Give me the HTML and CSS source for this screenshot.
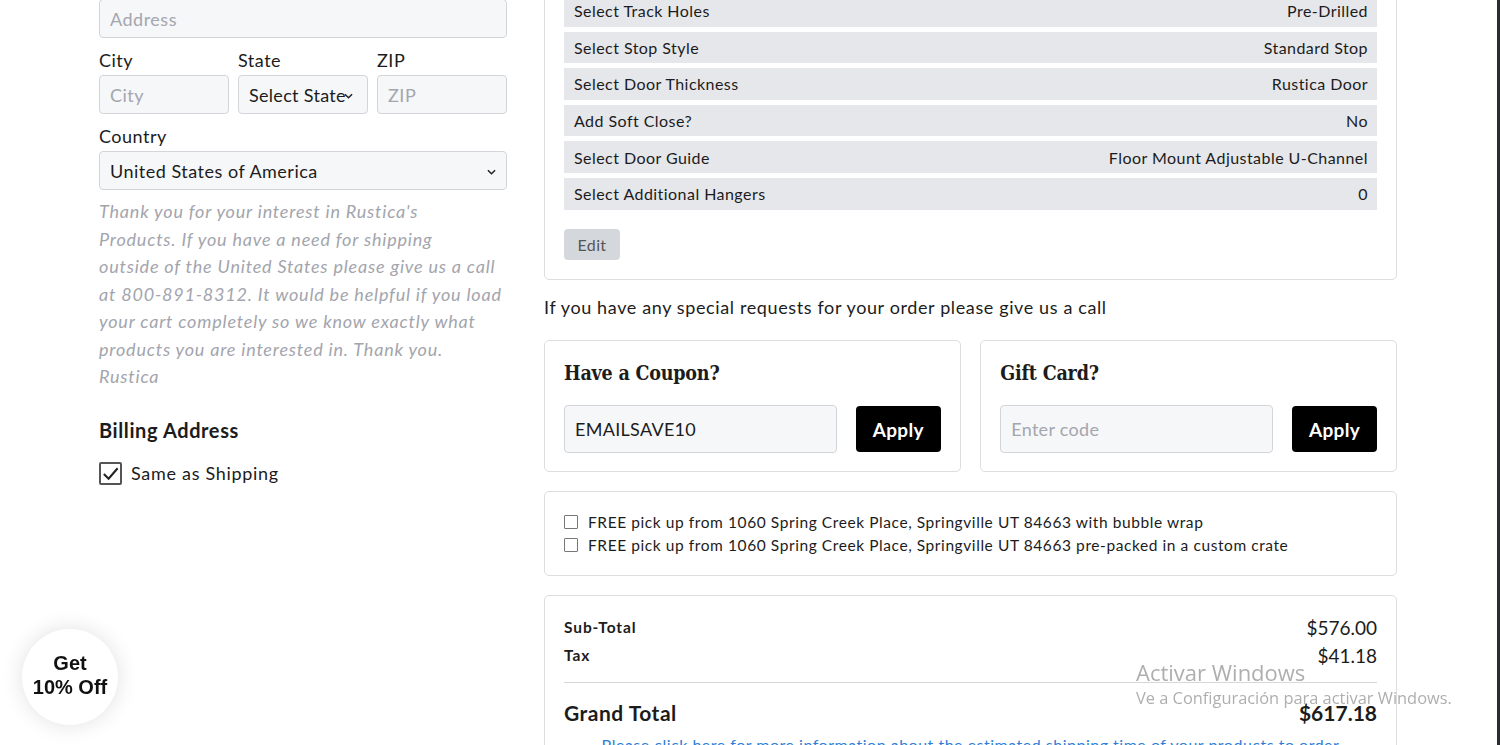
FILE: index.html
```html
<!DOCTYPE html>
<html lang="en">
    <head>
        <meta charset="UTF-8" />
        <meta name="viewport" content="width=device-width, initial-scale=1.0" />
        <title>Checkout</title>
        <link rel="stylesheet" href="styles.css">
    </head>
    <body>
        <div class="page">
            <div class="col-left">
                <input class="field" type="text" placeholder="Address">
                <div class="three">
                    <div class="grp">
                        <label class="lbl">City</label>
                        <input class="field" type="text" placeholder="City">
                    </div>
                    <div class="grp">
                        <label class="lbl">State</label>
                        <div class="field select select-sm">Select State<svg class="chev" viewBox="0 0 10 6"><path d="M1 1l4 4 4-4" fill="none" stroke="#222" stroke-width="1.6"/></svg></div>
                    </div>
                    <div class="grp">
                        <label class="lbl">ZIP</label>
                        <input class="field" type="text" placeholder="ZIP">
                    </div>
                </div>
                <div class="grp country">
                    <label class="lbl">Country</label>
                    <div class="field select">United States of America<svg class="chev" viewBox="0 0 10 6"><path d="M1 1l4 4 4-4" fill="none" stroke="#222" stroke-width="1.6"/></svg></div>
                </div>
                <p class="note">Thank you for your interest in Rustica's<br>Products. If you have a need for shipping<br>outside of the United States please give us a call<br>at 800-891-8312. It would be helpful if you load<br>your cart completely so we know exactly what<br>products you are interested in. Thank you.<br>Rustica</p>
                <h3 class="billing">Billing Address</h3>
                <label class="same">
                    <span class="bigbox"><svg viewBox="0 0 20 20"><path d="M3 10.5l5 5 9.5-11" fill="none" stroke="#222" stroke-width="2.2"/></svg></span>
                    Same as Shipping
                </label>
            </div>

            <div class="col-right">
                <div class="card options">
                    <div class="opt"><span>Select Track Holes</span><span>Pre-Drilled</span></div>
                    <div class="opt"><span>Select Stop Style</span><span>Standard Stop</span></div>
                    <div class="opt"><span>Select Door Thickness</span><span>Rustica Door</span></div>
                    <div class="opt"><span>Add Soft Close?</span><span>No</span></div>
                    <div class="opt"><span>Select Door Guide</span><span>Floor Mount Adjustable U-Channel</span></div>
                    <div class="opt"><span>Select Additional Hangers</span><span>0</span></div>
                    <button class="edit">Edit</button>
                </div>

                <p class="requests">If you have any special requests for your order please give us a call</p>

                <div class="codes">
                    <div class="card code">
                        <h4>Have a Coupon?</h4>
                        <div class="code-row">
                            <input class="code-input" type="text" value="EMAILSAVE10">
                            <button class="apply">Apply</button>
                        </div>
                    </div>
                    <div class="card code">
                        <h4>Gift Card?</h4>
                        <div class="code-row">
                            <input class="code-input" type="text" placeholder="Enter code">
                            <button class="apply">Apply</button>
                        </div>
                    </div>
                </div>

                <div class="card pickup">
                    <label class="pick"><span class="smallbox"></span>FREE pick up from 1060 Spring Creek Place, Springville UT 84663 with bubble wrap</label>
                    <label class="pick"><span class="smallbox"></span>FREE pick up from 1060 Spring Creek Place, Springville UT 84663 pre-packed in a custom crate</label>
                </div>

                <div class="card totals">
                    <div class="tot-row"><span class="tot-name">Sub-Total</span><span class="tot-val">$576.00</span></div>
                    <div class="tot-row"><span class="tot-name">Tax</span><span class="tot-val">$41.18</span></div>
                    <div class="tot-line"></div>
                    <div class="grand"><span>Grand Total</span><span class="grand-val">$617.18</span></div>
                    <p class="ship-link">Please click here for more information about the estimated shipping time of your products to order</p>
                </div>
            </div>
        </div>

        <div class="promo">Get<br>10% Off</div>

        <div class="activate">
            <div class="act-title">Activar Windows</div>
            <div class="act-sub">Ve a Configuración para activar Windows.</div>
        </div>

        <div class="edge"></div>
    </body>
</html>
```

FILE: styles.css
```css
body{
    margin: 0;
    padding: 0;
    background-color: #ffffff;
    font-family: Lato, "Open Sans", sans-serif;
    letter-spacing: 0.5px;
    color: #1c1c1c;
    overflow: hidden;
}

.page{
    display: grid;
    grid-template-columns: 408px 853px;
    column-gap: 37px;
    align-items: start;
    padding-left: 99px;
    margin-top: -25px;
}

/* ---- left column ---- */
.col-left{
    padding-top: 24px;
}

.field{
    box-sizing: border-box;
    width: 100%;
    height: 39px;
    border: 1px solid #d3d5da;
    border-radius: 4px;
    background-color: #f6f7f9;
    padding: 0 10px;
    font-family: Lato, sans-serif;
    font-size: 18px;
    letter-spacing: 0.5px;
    color: #1c1c1c;
    outline: none;
}
.field::placeholder{
    color: #a4a6ad;
}

.three{
    display: grid;
    grid-template-columns: 1fr 1fr 1fr;
    column-gap: 9px;
    margin-top: 10px;
}

.lbl{
    display: block;
    font-size: 18px;
    line-height: 24px;
    margin-bottom: 3px;
}

.country{
    margin-top: 10px;
}

.select{
    display: flex;
    align-items: center;
    justify-content: space-between;
    white-space: nowrap;
}
.select-sm{
    padding: 0 12px 0 10px;
    justify-content: flex-start;
    letter-spacing: 0.3px;
}
.select-sm .chev{
    margin-left: -2px;
}
.chev{
    flex-shrink: 0;
    width: 9px;
    height: 6px;
    margin-top: 3px;
}

.note{
    margin: 8px 0 0 0;
    font-size: 18px;
    line-height: 27.5px;
    font-style: italic;
    letter-spacing: 0.8px;
    white-space: nowrap;
    color: #a3a5ad;
}

.billing{
    margin: 27px 0 0 0;
    font-size: 20px;
    line-height: 24px;
    font-weight: 700;
    letter-spacing: 0.6px;
}

.same{
    display: flex;
    align-items: center;
    gap: 9px;
    margin-top: 20px;
    font-size: 18px;
    letter-spacing: 0.7px;
}
.bigbox{
    box-sizing: border-box;
    width: 23px;
    height: 23px;
    border: 2px solid #555;
    border-radius: 2px;
    display: flex;
    align-items: center;
    justify-content: center;
}
.bigbox svg{
    width: 19px;
    height: 19px;
}

/* ---- right column ---- */
.card{
    box-sizing: border-box;
    border: 1px solid #dcdde0;
    border-radius: 5px;
    background-color: #fff;
}

.options{
    padding: 19px 19px 19px 19px;
}
.opt{
    display: flex;
    justify-content: space-between;
    align-items: center;
    height: 31.6px;
    padding: 0 9px 0 10px;
    margin-bottom: 5px;
    background-color: #e6e7eb;
    font-size: 16px;
    letter-spacing: 0.45px;
}
.edit{
    margin-top: 14.5px;
    width: 56px;
    height: 31px;
    border: 0;
    border-radius: 4px;
    background-color: #d4d7dc;
    color: #555;
    font-family: Lato, sans-serif;
    font-size: 16px;
    letter-spacing: 0.4px;
}

.requests{
    margin: 15px 0 0 0;
    font-size: 18px;
    line-height: 24px;
    letter-spacing: 0.62px;
}

.codes{
    display: grid;
    grid-template-columns: 1fr 1fr;
    column-gap: 19.5px;
    margin-top: 21px;
}
.code{
    padding: 20px 19px 18px 19px;
}
.code h4{
    margin: 0;
    font-family: "DejaVu Serif", serif;
    font-stretch: condensed;
    font-size: 19.5px;
    line-height: 26px;
    font-weight: 700;
    letter-spacing: -0.2px;
}
.code-row{
    display: flex;
    align-items: center;
    gap: 19px;
    margin-top: 18px;
}
.code-input{
    box-sizing: border-box;
    flex: 1;
    min-width: 0;
    height: 48px;
    border: 1px solid #d3d5da;
    border-radius: 4px;
    background-color: #f6f7f9;
    padding: 0 10px;
    font-family: Lato, sans-serif;
    font-size: 18px;
    letter-spacing: 0.3px;
    color: #1c1c1c;
}
.code-input::placeholder{
    color: #a4a6ad;
}
.apply{
    width: 85px;
    height: 46px;
    border: 0;
    border-radius: 4px;
    background-color: #000;
    color: #fff;
    font-family: Lato, sans-serif;
    font-size: 19px;
    font-weight: 700;
    letter-spacing: 0.3px;
}

.pickup{
    margin-top: 19px;
    padding: 18px 19px 19px 19px;
}
.pick{
    display: flex;
    align-items: center;
    gap: 10px;
    height: 23px;
    font-size: 15.5px;
    letter-spacing: 0.58px;
}
.smallbox{
    box-sizing: border-box;
    width: 14px;
    height: 14px;
    border: 1px solid #777;
    border-radius: 1px;
    margin-top: 1px;
}

.totals{
    margin-top: 19px;
    padding: 17px 19px 0 19px;
}
.tot-row{
    display: flex;
    justify-content: space-between;
    align-items: center;
    height: 28px;
}
.tot-name{
    font-size: 15.5px;
    font-weight: 700;
    letter-spacing: 0.9px;
}
.tot-val{
    font-size: 19px;
    letter-spacing: 0;
}
.tot-line{
    height: 1px;
    background-color: #d6d7da;
    margin-top: 13px;
}
.grand{
    display: flex;
    justify-content: space-between;
    align-items: center;
    height: 30px;
    margin-top: 14px;
    font-size: 21px;
    font-weight: 700;
}
.grand-val{
    letter-spacing: 0;
}
.ship-link{
    margin: 7px 0 0 0;
    text-align: center;
    font-size: 16px;
    line-height: 22px;
    color: #2f7fd6;
}

/* ---- floating things ---- */
.promo{
    position: fixed;
    left: 22px;
    top: 629px;
    width: 96px;
    height: 96px;
    border-radius: 50%;
    background-color: #fff;
    box-shadow: 0 0 22px rgba(0,0,0,0.12);
    display: flex;
    align-items: center;
    justify-content: center;
    text-align: center;
    font-family: "Liberation Sans", Arial, sans-serif;
    font-weight: 700;
    font-size: 20px;
    line-height: 24px;
    letter-spacing: 0;
    color: #111;
    padding-bottom: 4px;
    box-sizing: border-box;
}

.activate{
    position: fixed;
    left: 1136px;
    top: 658px;
    color: rgba(120,120,120,0.6);
    font-family: "Open Sans", sans-serif;
    letter-spacing: 0;
}
.act-title{
    font-size: 22px;
    line-height: 28px;
}
.act-sub{
    font-size: 16.4px;
    line-height: 22px;
    margin-top: 1px;
}

.edge{
    position: fixed;
    top: 0;
    right: 0;
    width: 3px;
    height: 100%;
    background-color: #2a2c33;
}
```
